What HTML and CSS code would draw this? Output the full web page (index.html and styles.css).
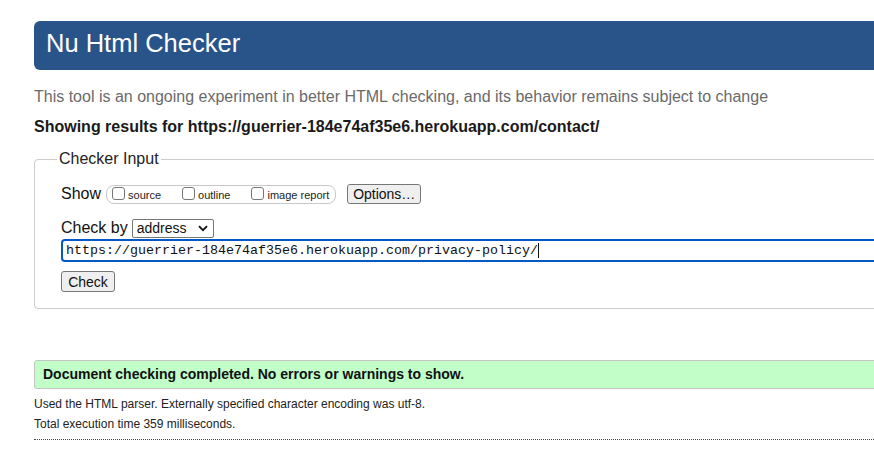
FILE: index.html
```html
<!DOCTYPE html>
<html lang="en">
<head>
<meta charset="utf-8">
<title>Nu Html Checker</title>
<link rel="stylesheet" href="styles.css">
</head>
<body>
<div class="page">
  <h1 class="title">Nu Html Checker</h1>
  <p class="intro">This tool is an ongoing experiment in better HTML checking, and its behavior remains subject to change</p>
  <p class="showing">Showing results for https://guerrier-184e74af35e6.herokuapp.com/contact/</p>
  <fieldset class="checker">
    <legend class="legend">Checker Input</legend>
    <div class="row show-row">
      <span class="row-label">Show</span>
      <span class="opts">
        <label class="opt"><span class="box"></span>source</label>
        <label class="opt"><span class="box"></span>outline</label>
        <label class="opt"><span class="box"></span>image report</label>
      </span>
      <span class="btn options-btn">Options…</span>
    </div>
    <div class="row by-row">
      <span class="row-label">Check by</span>
      <span class="select">address<svg class="chev" width="10" height="7" viewBox="0 0 10 7"><path d="M1 1.2 L5 5.2 L9 1.2" fill="none" stroke="#111" stroke-width="1.8"/></svg></span>
    </div>
    <div class="url">https://guerrier-184e74af35e6.herokuapp.com/privacy-policy/<span class="caret"></span></div>
    <div class="row"><span class="btn check-btn">Check</span></div>
  </fieldset>
  <div class="success">Document checking completed. No errors or warnings to show.</div>
  <p class="stat">Used the HTML parser. Externally specified character encoding was utf-8.</p>
  <p class="stat">Total execution time 359 milliseconds.</p>
  <div class="rule"></div>
</div>
</body>
</html>
```
FILE: styles.css
```css
html, body {
  margin: 0;
  padding: 0;
  overflow: hidden;
  background: #fff;
}
body {
  font-family: "Liberation Sans", Arial, sans-serif;
  color: #111;
}
.page {
  width: 1100px;
  padding: 21px 0 0 34px;
}
.title {
  margin: 0;
  height: 49px;
  box-sizing: border-box;
  padding: 4px 0 0 12px;
  line-height: 36px;
  font-size: 25.5px;
  font-weight: normal;
  color: #fff;
  background: #285489;
  border-radius: 6px;
}
.intro {
  margin: 17px 0 0;
  font-size: 16px;
  line-height: 20px;
  color: #6a6a6a;
}
.showing {
  margin: 10px 0 0;
  font-size: 16px;
  line-height: 20px;
  font-weight: bold;
  color: #1a1a1a;
}
.checker {
  margin: 13px 0 0;
  padding: 16px 0 16px 26px;
  border: 1px solid #cccccc;
  border-radius: 4px;
  display: flex;
  flex-direction: column;
}
.legend {
  padding: 0 2px;
  margin-left: -4px;
  font-size: 16px;
  color: #222;
}
.row {
  display: flex;
  align-items: center;
}
.row-label {
  font-size: 16px;
  margin-right: 5px;
  color: #111;
}
.show-row {
  height: 20px;
}
.opts {
  display: inline-flex;
  align-items: center;
  height: 19px;
  box-sizing: border-box;
  border: 1px solid #c8c8c8;
  border-radius: 8px;
  padding: 0 6px 0 5px;
  gap: 21px;
}
.opt {
  display: inline-flex;
  align-items: center;
  font-size: 11px;
  color: #222;
  padding-top: 2px;
}
.box {
  width: 11px;
  height: 11px;
  border: 1px solid #767676;
  border-radius: 3px;
  margin-right: 3px;
  margin-top: -3px;
  background: #fff;
}
.btn {
  display: inline-flex;
  align-items: center;
  justify-content: center;
  box-sizing: border-box;
  background: #efefef;
  border: 1px solid #767676;
  border-radius: 3px;
  font-size: 14px;
  color: #111;
}
.options-btn {
  margin-left: 11px;
  width: 74px;
  height: 20px;
}
.by-row {
  margin-top: 14px;
  height: 20px;
}
.row-label + .select {
  margin-left: -1px;
}
.select {
  display: inline-flex;
  align-items: center;
  justify-content: space-between;
  box-sizing: border-box;
  width: 82px;
  height: 19px;
  padding: 0 5px 0 4px;
  border: 1px solid #767676;
  border-radius: 2px;
  font-size: 14px;
  color: #111;
}
.url {
  margin-top: 1px;
  width: 1000px;
  height: 23px;
  box-sizing: border-box;
  border: 2px solid #0059c6;
  border-radius: 4px;
  padding: 0 0 0 3px;
  font-family: "Liberation Mono", "DejaVu Sans Mono", monospace;
  font-size: 13.33px;
  line-height: 19px;
  color: #111;
  display: flex;
  align-items: center;
}
.caret {
  display: inline-block;
  width: 1px;
  height: 15px;
  background: #111;
}
.check-btn {
  margin-top: 9px;
  width: 54px;
  height: 21px;
}
.success {
  margin-top: 51px;
  height: 29px;
  box-sizing: border-box;
  border: 1px solid #c4c4c4;
  border-radius: 3px;
  background: #c1fec8;
  padding-left: 8px;
  font-size: 14px;
  font-weight: bold;
  line-height: 27px;
  color: #111;
}
.stat {
  margin: 0;
  font-size: 12px;
  line-height: 20px;
  color: #222;
}
.success + .stat {
  margin-top: 5px;
}
.rule {
  margin-top: 5px;
  border-top: 1px dotted #444;
}
```
